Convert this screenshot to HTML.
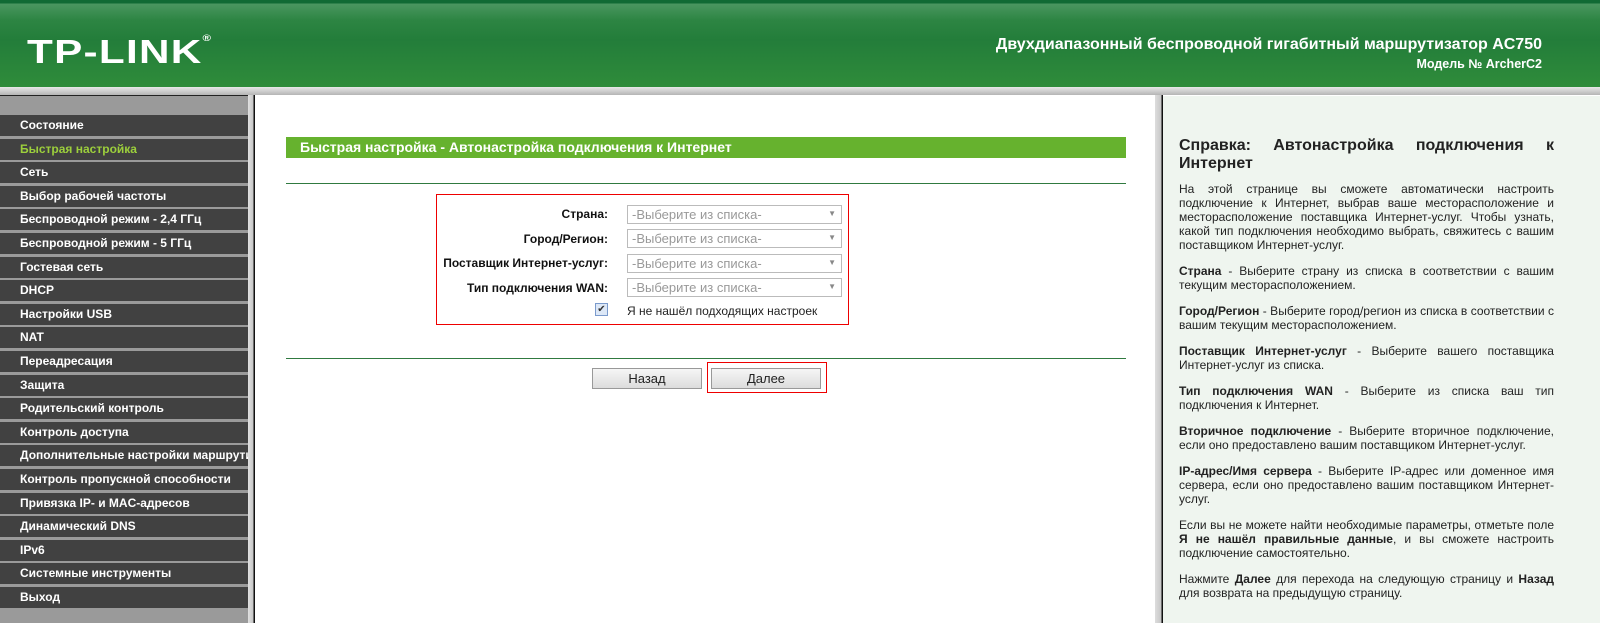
<!DOCTYPE html>
<html><head><meta charset="utf-8"><style>
*{margin:0;padding:0;box-sizing:border-box}
body{width:1600px;height:623px;overflow:hidden;font-family:"Liberation Sans",Arial,sans-serif;background:#fff;position:relative}
#hdr{position:absolute;left:0;top:0;width:1600px;height:87px;background:linear-gradient(#106a34 0,#106a34 3px,#4a9660 4px,#2d8543 20px,#237d3a 40px,#2f8c3a 87px)}
#logo{position:absolute;left:27px;top:33px;color:#fff;font:bold 33px "Liberation Sans",sans-serif;letter-spacing:1px;transform:scaleX(1.28);transform-origin:left}
#t1{position:absolute;right:58px;top:36px;color:#fff;font-weight:bold;font-size:16px}
#t2{position:absolute;right:58px;top:57px;color:#fff;font-weight:bold;font-size:12.5px}
#band{position:absolute;top:87px;left:0;width:1600px;height:8px;background:linear-gradient(#e8e8e8,#b5b5b5)}
#side{position:absolute;left:0;top:95px;width:248px;height:528px;background:#9a9a9a;border-top:1px solid #222}
.mi{position:absolute;left:0;width:248px;height:21px;background:#414141;color:#fff;font-weight:bold;font-size:12px;padding:3px 0 0 20px;white-space:nowrap;overflow:hidden}
.mi.a{color:#9ccf3c}
#sd{position:absolute;left:248px;top:95px;width:7px;height:528px;background:linear-gradient(90deg,#e0e0e0,#c8c8c8 5px,#111 6px)}
#main{position:absolute;left:255px;top:96px;width:900px;height:527px;background:#fff}
#hd2{position:absolute;left:1155px;top:95px;width:8px;height:528px;background:linear-gradient(90deg,#ddd,#c8c8c8 6px,#111 7px)}
#help{position:absolute;left:1163px;top:96px;width:437px;height:527px;background:#eff5ef;padding:41px 46px 0 16px;font-size:12px;color:#222;text-align:justify;line-height:14px}
#help h3{font-size:16px;line-height:18px;margin-bottom:9px;text-align:justify}
#help p{margin-bottom:12px}
.bar{position:absolute;left:286px;top:137px;width:840px;height:21px;background:#66b22e;color:#fff;font-weight:bold;font-size:14px;padding:2px 0 0 14px}
.hr{position:absolute;left:286px;width:840px;height:1px;background:#307a40}
#box{position:absolute;left:436px;top:194px;width:413px;height:131px;border:1px solid #e00}
.lb{position:absolute;right:240px;font-weight:bold;font-size:12px;color:#111;white-space:nowrap}
.sel{position:absolute;left:190px;width:215px;height:19px;border:1px solid #bbb;background:#fff;color:#999;font-size:13px;padding:1px 0 0 4px}
.sel:after{content:"▼";position:absolute;right:5px;top:3px;font-size:8px;color:#888}
.btn{position:absolute;top:368px;width:110px;height:21px;border:1px solid #999;background:linear-gradient(#f6f6f6,#dcdcdc);font-size:13px;text-align:center;padding-top:2px;color:#222}
</style></head><body>
<div id="hdr"><div id="logo">TP-LINK<sup style="font-size:9px;vertical-align:top">®</sup></div>
<div id="t1">Двухдиапазонный беспроводной гигабитный маршрутизатор AC750</div>
<div id="t2">Модель № ArcherC2</div></div>
<div id="band"></div>
<div id="side">
<div class="mi" style="top:19px">Состояние</div>
<div class="mi a" style="top:42.6px">Быстрая настройка</div>
<div class="mi" style="top:66.2px">Сеть</div>
<div class="mi" style="top:89.8px">Выбор рабочей частоты</div>
<div class="mi" style="top:113.4px">Беспроводной режим - 2,4 ГГц</div>
<div class="mi" style="top:137px">Беспроводной режим - 5 ГГц</div>
<div class="mi" style="top:160.6px">Гостевая сеть</div>
<div class="mi" style="top:184.2px">DHCP</div>
<div class="mi" style="top:207.8px">Настройки USB</div>
<div class="mi" style="top:231.4px">NAT</div>
<div class="mi" style="top:255px">Переадресация</div>
<div class="mi" style="top:278.6px">Защита</div>
<div class="mi" style="top:302.2px">Родительский контроль</div>
<div class="mi" style="top:325.8px">Контроль доступа</div>
<div class="mi" style="top:349.4px">Дополнительные настройки маршрутизации</div>
<div class="mi" style="top:373px">Контроль пропускной способности</div>
<div class="mi" style="top:396.6px">Привязка IP- и MAC-адресов</div>
<div class="mi" style="top:420.2px">Динамический DNS</div>
<div class="mi" style="top:443.8px">IPv6</div>
<div class="mi" style="top:467.4px">Системные инструменты</div>
<div class="mi" style="top:491px">Выход</div>
</div>
<div id="sd"></div>
<div id="main"></div>
<div class="bar">Быстрая настройка - Автонастройка подключения к Интернет</div>
<div class="hr" style="top:183px"></div>
<div id="box">
<div class="lb" style="top:12px">Страна:</div><div class="sel" style="top:10px">-Выберите из списка-</div>
<div class="lb" style="top:37px">Город/Регион:</div><div class="sel" style="top:34px">-Выберите из списка-</div>
<div class="lb" style="top:61px">Поставщик Интернет-услуг:</div><div class="sel" style="top:59px">-Выберите из списка-</div>
<div class="lb" style="top:86px">Тип подключения WAN:</div><div class="sel" style="top:83px">-Выберите из списка-</div>
<div style="position:absolute;left:158px;top:108px;width:13px;height:13px;border:1px solid #7a9acc;background:#dde8f7;font-size:10px;line-height:11px;text-align:center;color:#333">✔</div>
<div style="position:absolute;left:190px;top:109px;font-size:12px;color:#222">Я не нашёл подходящих настроек</div>
</div>
<div class="hr" style="top:358px"></div>
<div class="btn" style="left:592px">Назад</div>
<div style="position:absolute;left:707px;top:362px;width:120px;height:31px;border:1px solid #e00"></div>
<div class="btn" style="left:711px">Далее</div>
<div id="hd2"></div>
<div id="help">
<h3>Справка: Автонастройка подключения к Интернет</h3>
<p>На этой странице вы сможете автоматически настроить подключение к Интернет, выбрав ваше месторасположение и месторасположение поставщика Интернет-услуг. Чтобы узнать, какой тип подключения необходимо выбрать, свяжитесь с вашим поставщиком Интернет-услуг.</p>
<p><b>Страна</b> - Выберите страну из списка в соответствии с вашим текущим месторасположением.</p>
<p><b>Город/Регион</b> - Выберите город/регион из списка в соответствии с вашим текущим месторасположением.</p>
<p><b>Поставщик Интернет-услуг</b> - Выберите вашего поставщика Интернет-услуг из списка.</p>
<p><b>Тип подключения WAN</b> - Выберите из списка ваш тип подключения к Интернет.</p>
<p><b>Вторичное подключение</b> - Выберите вторичное подключение, если оно предоставлено вашим поставщиком Интернет-услуг.</p>
<p><b>IP-адрес/Имя сервера</b> - Выберите IP-адрес или доменное имя сервера, если оно предоставлено вашим поставщиком Интернет-услуг.</p>
<p>Если вы не можете найти необходимые параметры, отметьте поле <b>Я не нашёл правильные данные</b>, и вы сможете настроить подключение самостоятельно.</p>
<p>Нажмите <b>Далее</b> для перехода на следующую страницу и <b>Назад</b> для возврата на предыдущую страницу.</p>
</div>
</body></html>
